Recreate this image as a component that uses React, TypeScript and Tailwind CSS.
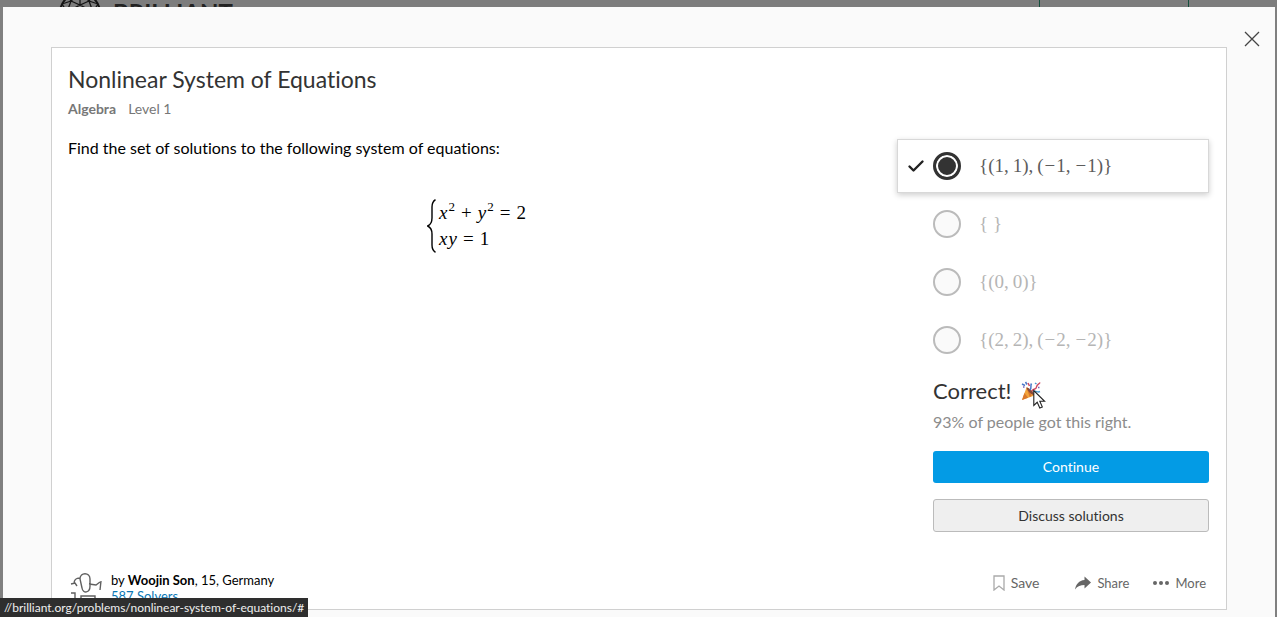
import { Fragment, type ReactNode } from "react";

const serif = "font-['Liberation_Serif',serif]";

function Comma() {
  return <span className="mr-1">,</span>;
}

function Minus() {
  return <span className="mx-px">−</span>;
}

function Pair({ a, negative = false }: { a: number; negative?: boolean }) {
  return (
    <>
      ({negative && <Minus />}
      {a}
      <Comma />
      {negative && <Minus />}
      {a})
    </>
  );
}

const options: { id: string; body: ReactNode }[] = [
  { id: "ones", body: <Fragment><Pair a={1} /><Comma /><Pair a={1} negative /></Fragment> },
  { id: "empty", body: " " },
  { id: "zero", body: <Pair a={0} /> },
  { id: "twos", body: <Fragment><Pair a={2} /><Comma /><Pair a={2} negative /></Fragment> },
];

function Header() {
  return (
    <header className="flex h-[7px] shrink-0 items-start overflow-hidden bg-[#7d7d7d] pr-[88px] pl-[59px]">
      <svg className="-mt-2 size-[42px] shrink-0" viewBox="0 0 42 42" fill="none" stroke="#151515" strokeWidth="1.3">
        <circle cx="21" cy="21" r="20" strokeWidth="2" />
        <path d="M21 1 12 9 3 12M21 1l9 8 9 3M12 9l9 4 9-4M21 1v12M12 9 8 20M30 9l4 11M3 12l5 8 13-7 13 7 5-8M12 9 9 5M30 9l3-4" />
      </svg>
      <span className="-mt-[3px] ml-3 text-[24px] leading-8 font-bold text-[#222]">BRILLIANT</span>
      <span className="ml-auto h-8 w-[150px] border-x border-[#16503e]" />
    </header>
  );
}

function PartyPopper() {
  return (
    <svg className="size-5" viewBox="0 0 20 20" fill="none" role="img" aria-label="Party popper">
      <path d="M1 19 5.5 6.5c3 .5 7 4 8 8z" fill="#f2a33a" />
      <path d="M1 19 3.4 12l3.7 4.8zM5.5 6.5l3.2 9.5 2-1-3-7.5z" fill="#d9772b" />
      <path d="M5.5 6.5c3 .5 7 4 8 8-3-.7-7-4-8-8z" fill="#8a4a3a" />
      <path d="M9 9c2-2 0-4 1.5-6.5M1 3l3 1.5M4.5 1 6 3.5" stroke="#4a78c8" strokeWidth="1.5" />
      <path d="M11 10c2-3 4-1 4.5-4S18 3.5 19 1.5M7 2l1.5 3" stroke="#cf4a62" strokeWidth="1.5" />
      <path d="M12 11c3-2 4 1 7-.5M14 2l1.5 1" stroke="#4a9bd0" strokeWidth="1.5" />
      <path d="M2 6h1.5M17 6.5h1.5" stroke="#7b62b8" strokeWidth="1.5" />
    </svg>
  );
}

function Pointer() {
  return (
    <svg className="pointer-events-none absolute top-2 left-3 h-[20px] w-[13px]" viewBox="0 0 13 20" aria-hidden="true">
      <path d="M.8 1.5v15l3.4-3.2 2.6 5.7 2.5-1.1-2.5-5.6h4.8z" fill="#fff" stroke="#222" strokeWidth="1.1" />
    </svg>
  );
}

function Equations() {
  return (
    <div className={`mt-[41px] flex items-center justify-center gap-[3px] text-black ${serif}`}>
      <svg className="h-[54px] w-[9px]" viewBox="0 0 9 54" fill="none" stroke="#000" aria-hidden="true">
        <path d="M8.5 .7C5.5 2.5 5 4.5 5 8v11c0 4-1.2 6.5-4.3 8C3.8 28.5 5 31 5 35v11c0 3.5 .5 5.5 3.5 7.3" strokeWidth="1.4" />
      </svg>
      <div className="text-[19px] leading-[26px]">
        <div>
          <i>x</i>
          <sup className="-top-2 ml-px text-[13px] leading-none">2</sup>
          <span className="mx-1.5">+</span>
          <i>y</i>
          <sup className="-top-2 ml-px text-[13px] leading-none">2</sup>
          <span className="mx-1.5">=</span>2
        </div>
        <div>
          <i className="mr-px">x</i>
          <i>y</i>
          <span className="mx-1.5">=</span>1
        </div>
      </div>
    </div>
  );
}

function Answers() {
  return (
    <div role="radiogroup" aria-label="Answers" className="flex flex-col gap-1">
      {options.map(({ id, body }) => (
        <label
          key={id}
          className="group flex h-[54px] items-center border border-transparent pl-[9px] text-[#b5b5b5] has-checked:border-[#d8d8d8] has-checked:bg-white has-checked:text-[#5c5c5c] has-checked:shadow-[0_2px_6px_rgba(0,0,0,0.2)]"
        >
          <svg className="invisible h-4 w-[18px] group-has-checked:visible" viewBox="0 0 18 16" fill="none" stroke="#222" strokeWidth="2.4" strokeLinecap="round" strokeLinejoin="round" aria-hidden="true">
            <path d="M2.5 8.5 6.5 12.5 15.5 3.5" />
          </svg>
          <input
            type="radio"
            name="answer"
            value={id}
            defaultChecked={id === "ones"}
            className="ml-2 size-7 shrink-0 appearance-none rounded-full border-2 border-[#bbb] bg-[#fafafa] checked:border-[3px] checked:border-[#333] checked:bg-[#333] checked:shadow-[inset_0_0_0_2px_white]"
          />
          <span className={`ml-[18px] text-[19px] leading-6 ${serif}`}>
            {"{"}
            {body}
            {"}"}
          </span>
        </label>
      ))}
    </div>
  );
}

export default function App() {
  return (
    <div className="flex h-screen flex-col overflow-hidden bg-[#808080] font-['Lato',sans-serif] [font-variant-ligatures:none]">
      <Header />
      <div className="mr-0.5 ml-[3px] flex min-h-0 flex-1 bg-[#fafafa] pt-10 pb-[7px] pl-12">
        <main className="flex flex-1 flex-col border border-[#d0d0d0] bg-white pr-[17px] pl-4">
          <h1 className="mt-[15px] text-[23px] leading-8 text-[#333]">Nonlinear System of Equations</h1>
          <p className="mt-1 text-sm leading-5 text-[#777]">
            <b>Algebra</b>
            <span className="ml-3">Level 1</span>
          </p>
          <div className="mt-5 flex gap-3">
            <section className="flex-1">
              <p className="-mt-px text-base leading-5 text-black">Find the set of solutions to the following system of equations:</p>
              <Equations />
            </section>
            <section className="w-[312px]">
              <Answers />
              <div className="pl-9">
                <h2 className="mt-2 flex items-center gap-2.5 text-[22px] leading-8 text-[#333]">
                  Correct!
                  <span className="relative">
                    <PartyPopper />
                    <Pointer />
                  </span>
                </h2>
                <p className="mt-[3px] text-base leading-6 text-[#8c8c8c]">93% of people got this right.</p>
                <button type="button" className="mt-[17px] block h-8 w-full rounded-[3px] bg-[#039be5] text-sm text-white">
                  Continue
                </button>
                <button type="button" className="mt-4 block h-[33px] w-full rounded-[3px] border border-[#bbb] bg-[#efefef] text-sm text-[#333]">
                  Discuss solutions
                </button>
              </div>
            </section>
          </div>
          <footer className="mt-auto flex items-start justify-between pb-[7px]">
            <div className="flex gap-[9px]">
              <svg className="ml-0.5 size-8" viewBox="0 0 32 32" fill="none" stroke="#606060" strokeWidth="1.4" aria-hidden="true">
                <path d="M10 9c0-7 10-7 10 0v7c0 7-7 8-8 2zM10 8c-4 0-6 1-6 6M1 14l4-1 2 3M19 14l7 1 4-3M31 11l-1 9M1 23h4v8M3 31h4M11 32v-6h14v6M14 29h8" />
              </svg>
              <div className="text-[13px]">
                <p className="leading-5 text-black">
                  by <b>Woojin Son</b>, 15, Germany
                </p>
                <a href="#solvers" className="block leading-3 text-[#0b78b5]">
                  587 Solvers
                </a>
              </div>
            </div>
            <div className="mt-[3px] mr-[3px] flex items-center gap-6 text-[13px] leading-5 text-[#666]">
              <button type="button" className="mr-3 flex items-center gap-1.5 text-sm leading-5">
                <svg className="h-4 w-3" viewBox="0 0 12 16" fill="none" stroke="#aaa" strokeWidth="1.3" aria-hidden="true">
                  <path d="M1 1h10v14l-5-4-5 4z" />
                </svg>
                Save
              </button>
              <button type="button" className="flex items-center gap-1.5">
                <svg className="h-3.5 w-4" viewBox="0 0 16 14" fill="#666" aria-hidden="true">
                  <path d="M9.5 .5l6.5 6-6.5 6V9C5.5 9 2.5 10 0 13.5c1-5.5 4-9 9.5-9.5z" />
                </svg>
                Share
              </button>
              <button type="button" className="flex items-center gap-1.5">
                <svg className="h-1 w-4" viewBox="0 0 16 4" fill="#666" aria-hidden="true">
                  <circle cx="2" cy="2" r="2" />
                  <circle cx="8" cy="2" r="2" />
                  <circle cx="14" cy="2" r="2" />
                </svg>
                More
              </button>
            </div>
          </footer>
        </main>
        <aside className="flex w-12 justify-center pl-0.5">
          <button type="button" aria-label="Close" className="-mt-4 h-4 w-4">
            <svg className="size-4" viewBox="0 0 16 16" fill="none" stroke="#444" strokeWidth="1.3" aria-hidden="true">
              <path d="M1 1l14 14M15 1 1 15" />
            </svg>
          </button>
        </aside>
      </div>
      <div className="fixed bottom-0 left-0 bg-[#2e2e2e] px-1 text-xs leading-[19px] text-[#eee]">
        //brilliant.org/problems/nonlinear-system-of-equations/#
      </div>
    </div>
  );
}
